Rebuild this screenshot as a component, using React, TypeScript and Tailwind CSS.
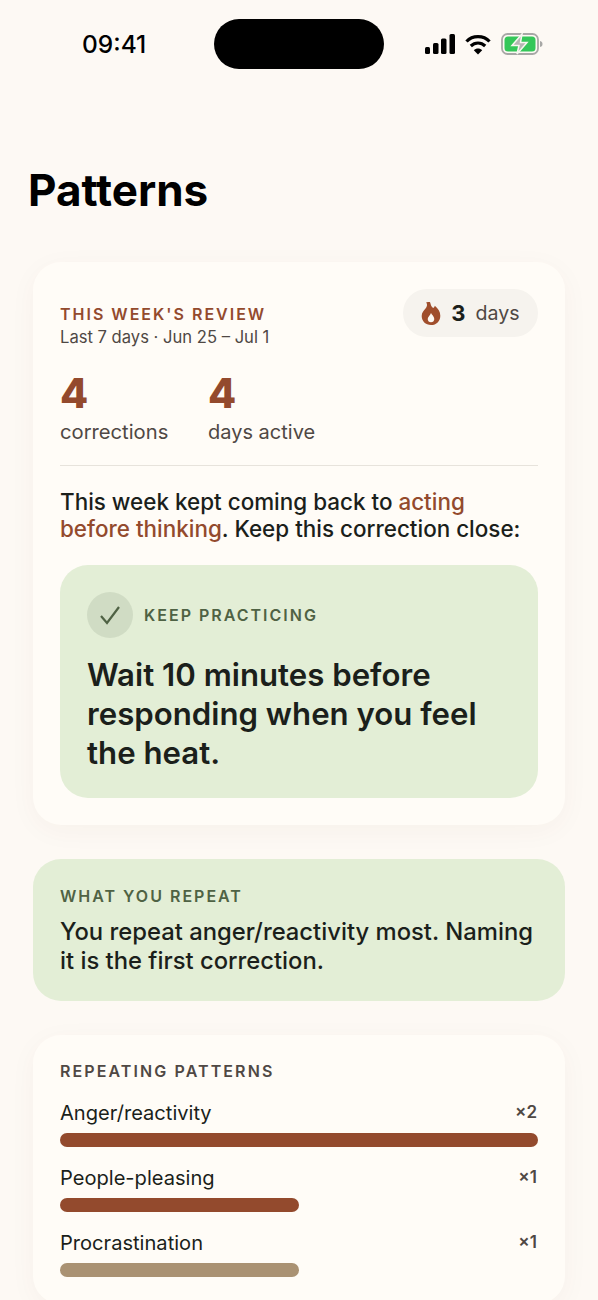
const patterns = [
  { name: 'Anger/reactivity', count: '×2', width: 'w-full', color: 'bg-[#934a2d]' },
  { name: 'People-pleasing', count: '×1', width: 'w-1/2', color: 'bg-[#934a2d]' },
  { name: 'Procrastination', count: '×1', width: 'w-1/2', color: 'bg-[#aa9273]' },
];

function StatusIcons() {
  return (
    <div className="flex items-center gap-[10px] pr-[55px]">
      <svg width="30" height="22" viewBox="0 0 30 22" fill="#000">
        <rect x="0" y="14" width="5" height="7" rx="1.5" />
        <rect x="8" y="10" width="5.500" height="11" rx="1.5" />
        <rect x="16" y="5.500" width="5.500" height="15.500" rx="1.5" />
        <rect x="24.500" y="1" width="5.500" height="20" rx="1.5" />
      </svg>
      <svg width="26" height="22" viewBox="0 0 26 22" fill="none" stroke="#000" strokeWidth="3.200">
        <path d="M1.500 8.500C7.500 2 18.500 2 24.500 8.500" />
        <path d="M5.800 13C10 9 16 9 20.200 13" />
        <path d="M13 21.500L8.800 17.200C11 15 15 15 17.200 17.200Z" fill="#000" stroke="none" />
      </svg>
      <svg width="42" height="22" viewBox="0 0 42 22" fill="none">
        <rect x="1" y="1" width="36" height="20" rx="5.500" stroke="#a8a8a6" strokeWidth="1.800" />
        <rect x="3.500" y="3.500" width="31" height="15" rx="3.500" fill="#34c759" />
        <path d="M39 8C41 8.500 41.500 9.500 41.500 11C41.500 12.500 41 13.500 39 14Z" fill="#a8a8a6" />
        <path d="M21 1L11 12.500H18L16 21L26 9.500H19.500Z" fill="#b5b5b3" stroke="#f6f7ef" strokeWidth="1.500" />
      </svg>
    </div>
  );
}

function Flame() {
  return (
    <svg width="20" height="23" viewBox="0 0 18 21">
      <path
        d="M8 0C9 2 8.500 3.500 11 5.500C12 4.800 12.300 4.300 12.500 3.500C15.500 6 17.500 9 17.500 12.500C17.500 17.500 14 21 9 21C4 21 0.500 17.500 0.500 12.800C0.500 9.500 2.500 8 4 6C5.500 4 6 2 4.500 0.500C5.500 0 7 0 8 0Z"
        fill="#a04e2c"
      />
      <path
        d="M9 10C9.500 11.500 12 13 12 15.500C12 17.300 10.700 18.500 9 18.500C7.300 18.500 6 17.300 6 15.500C6 13.300 8.500 12 9 10Z"
        fill="#fdf8f2"
      />
    </svg>
  );
}

export default function App() {
  return (
    <div className="h-[1300px] overflow-hidden bg-[#fdf9f4] font-['Inter',sans-serif] text-[#1b1f1b]">
      <div className="grid h-[88px] grid-cols-[1fr_170px_1fr] items-center">
        <span className="pl-[82px] text-[24.500px] font-medium leading-none text-black">09:41</span>
        <div className="h-[50px] rounded-full bg-black" />
        <div className="flex justify-end">
          <StatusIcons />
        </div>
      </div>

      <h1 className="mt-[75px] pl-[28px] text-[44px] font-bold leading-[54px] text-black">Patterns</h1>

      <div className="mt-[45px] px-[33px]">
        <section className="rounded-[28px] bg-[#fffcf7] px-[27px] py-[27px] shadow-[0_6px_28px_rgba(90,60,30,0.04)]">
          <div className="flex items-start justify-between">
            <div className="pt-[16px]">
              <p className="text-[16px] font-semibold uppercase leading-[18px] tracking-[2px] text-[#934a2d]">This week's review</p>
              <p className="mt-[4px] text-[16.600px] leading-[20px] text-[#4f4844]">Last 7 days · Jun 25 – Jul 1</p>
            </div>
            <div className="flex h-[48px] w-[135px] items-center justify-center gap-[10px] rounded-full bg-[#f6f3ee]">
              <Flame />
              <span className="text-[22px] font-bold text-[#1b1f1b]">3</span>
              <span className="pt-[1px] text-[19.600px] text-[#4f4844]">days</span>
            </div>
          </div>

          <div className="mt-[21px] flex gap-[40px] border-b border-[#e7e3dc] pb-[20px]">
            <div className="w-[108px]">
              <p className="text-[41px] font-extrabold leading-[50px] text-[#934a2d]">4</p>
              <p className="mt-[1px] text-[20.200px] leading-[26px] text-[#4f4844]">corrections</p>
            </div>
            <div>
              <p className="text-[41px] font-extrabold leading-[50px] text-[#934a2d]">4</p>
              <p className="mt-[1px] text-[20px] leading-[26px] text-[#4f4844]">days active</p>
            </div>
          </div>

          <p className="mt-[22px] text-[22.450px] font-medium leading-[27px]">
            This week kept coming back to <span className="text-[#934a2d]">acting before thinking</span>. Keep this correction close:
          </p>

          <div className="mt-[23px] rounded-[28px] bg-[#e3eed6] px-[27px] pb-[25px] pt-[27px]">
            <div className="flex items-center gap-[11px]">
              <div className="flex h-[46px] w-[46px] items-center justify-center rounded-full bg-[#d0dcc4]">
                <svg width="20" height="19" viewBox="0 0 20 19" fill="none" stroke="#4f6244" strokeWidth="2.200">
                  <path d="M1 10L7 17L19 1" />
                </svg>
              </div>
              <span className="text-[16px] font-semibold uppercase tracking-[2px] text-[#4f6244]">Keep practicing</span>
            </div>
            <p className="mt-[18px] text-[31.200px] font-semibold leading-[39px]">Wait 10 minutes before responding when you feel the heat.</p>
          </div>
        </section>

        <section className="mt-[34px] rounded-[28px] bg-[#e3eed6] px-[27px] pb-[26px] pt-[28px]">
          <p className="text-[16px] font-semibold uppercase leading-[18px] tracking-[2px] text-[#4f6244]">What you repeat</p>
          <p className="mt-[12px] text-[23.800px] font-medium leading-[29px]">You repeat anger/reactivity most. Naming it is the first correction.</p>
        </section>

        <section className="mt-[34px] rounded-[28px] bg-[#fffcf7] px-[27px] pb-[27px] pt-[27px] shadow-[0_6px_28px_rgba(90,60,30,0.04)]">
          <p className="mb-[20px] text-[16px] font-semibold uppercase leading-[18px] tracking-[2.100px] text-[#4f4844]">Repeating patterns</p>
          <div className="flex flex-col gap-[18px]">
            {patterns.map((p) => (
              <div key={p.name}>
                <div className="flex items-center justify-between">
                  <span className="text-[20.100px] leading-[26px]">{p.name}</span>
                  <span className="pr-[1px] text-[17px] font-semibold text-[#4f4844]">{p.count}</span>
                </div>
                <div className={`mt-[7px] h-[14px] rounded-full ${p.width} ${p.color}`} />
              </div>
            ))}
          </div>
        </section>
      </div>
    </div>
  );
}
